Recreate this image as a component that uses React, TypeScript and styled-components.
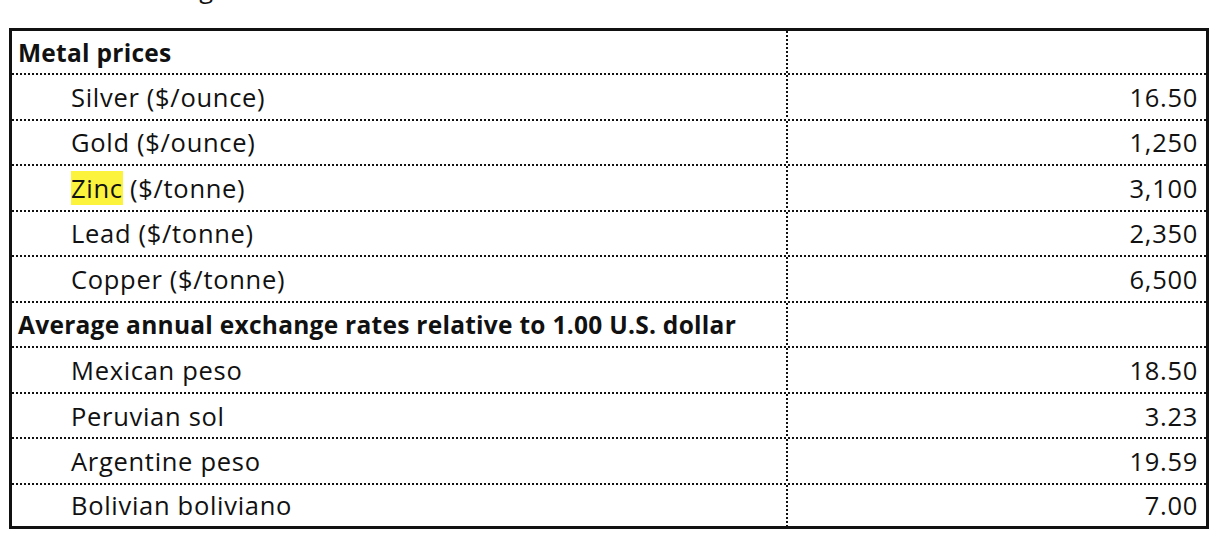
import React from 'react';
import styled, { createGlobalStyle } from 'styled-components';

const GlobalStyle = createGlobalStyle`
  html, body {
    margin: 0;
    padding: 0;
    background: #ffffff;
  }
  body {
    font-family: 'Open Sans', 'Lato', sans-serif;
    color: #111111;
  }
`;

const Page = styled.div`
  width: 1224px;
  height: 548px;
  overflow: hidden;
  background: #ffffff;
`;

// only the descender of the sentence above the table peeks in
const Caption = styled.div`
  height: 28px;
  padding-left: 51px;
`;

const CaptionClip = styled.div`
  height: 4px;
  overflow: hidden;
  display: flex;
  align-items: flex-end;
  font-size: 25.5px;
  letter-spacing: 0.3px;
  line-height: 1;
  white-space: nowrap;
  & > span {
    margin-bottom: 3px;
  }
`;

const Table = styled.div`
  margin-left: 9px;
  width: 1194px;
  border: 3px solid #111111;
  display: flex;
  flex-direction: column;
`;

const dotsX = 'linear-gradient(to right, #111111 50%, transparent 50%)';
const dotsY = 'linear-gradient(to bottom, #111111 50%, transparent 50%)';

const Row = styled.div`
  display: grid;
  grid-template-columns: 776px 1fr;
  height: 45.55px;
  box-sizing: border-box;
  padding-bottom: 2px;
  background-image: ${dotsX};
  background-size: 4px 2px;
  background-repeat: repeat-x;
  background-position: left bottom;
  &:first-child {
    height: 44px;
  }
  &:last-child {
    height: 41px;
    padding-bottom: 0;
    background-image: none;
  }
`;

const LabelCell = styled.div<{ $heading?: boolean }>`
  display: flex;
  align-items: center;
  padding-left: ${(p) => (p.$heading ? '6px' : '59px')};
  background-image: ${dotsY};
  background-size: 2px 4px;
  background-repeat: repeat-y;
  background-position: right top;
  font-size: ${(p) => (p.$heading ? '24.5px' : '25.5px')};
  font-weight: ${(p) => (p.$heading ? 700 : 400)};
  letter-spacing: ${(p) => (p.$heading ? '0.27px' : '0.7px')};
  white-space: nowrap;
`;

const ValueCell = styled.div`
  display: flex;
  align-items: center;
  justify-content: flex-end;
  padding-right: 8px;
  font-size: 25.5px;
  letter-spacing: 0.7px;
`;

const Mark = styled.span`
  background: #fbf33c;
`;

type Line =
  | { kind: 'heading'; label: string }
  | { kind: 'item'; label: React.ReactNode; value: string };

const lines: Line[] = [
  { kind: 'heading', label: 'Metal prices' },
  { kind: 'item', label: 'Silver ($/ounce)', value: '16.50' },
  { kind: 'item', label: 'Gold ($/ounce)', value: '1,250' },
  {
    kind: 'item',
    label: (
      <span>
        <Mark>Zinc</Mark> ($/tonne)
      </span>
    ),
    value: '3,100',
  },
  { kind: 'item', label: 'Lead ($/tonne)', value: '2,350' },
  { kind: 'item', label: 'Copper ($/tonne)', value: '6,500' },
  { kind: 'heading', label: 'Average annual exchange rates relative to 1.00 U.S. dollar' },
  { kind: 'item', label: 'Mexican peso', value: '18.50' },
  { kind: 'item', label: 'Peruvian sol', value: '3.23' },
  { kind: 'item', label: 'Argentine peso', value: '19.59' },
  { kind: 'item', label: 'Bolivian boliviano', value: '7.00' },
];

export default function App() {
  return (
    <Page>
      <GlobalStyle />
      <Caption>
        <CaptionClip>
          <span>The following</span>
        </CaptionClip>
      </Caption>
      <Table>
        {lines.map((line, i) =>
          line.kind === 'heading' ? (
            <Row key={i}>
              <LabelCell $heading>{line.label}</LabelCell>
              <ValueCell />
            </Row>
          ) : (
            <Row key={i}>
              <LabelCell>{line.label}</LabelCell>
              <ValueCell>{line.value}</ValueCell>
            </Row>
          )
        )}
      </Table>
    </Page>
  );
}
